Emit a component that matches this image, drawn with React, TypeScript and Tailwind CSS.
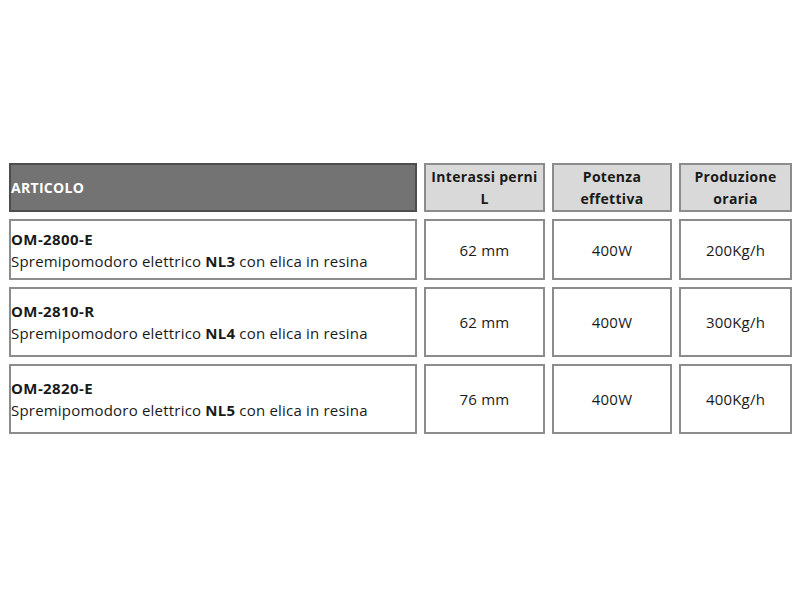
import React from "react";

const rows = [
  { code: "OM-2800-E", nl: "NL3", interassi: "62 mm", potenza: "400W", prod: "200Kg/h", h: "h-[61px]" },
  { code: "OM-2810-R", nl: "NL4", interassi: "62 mm", potenza: "400W", prod: "300Kg/h", h: "h-[70px]" },
  { code: "OM-2820-E", nl: "NL5", interassi: "76 mm", potenza: "400W", prod: "400Kg/h", h: "h-[70px]" },
];

export default function App() {
  return (
    <div className="w-[800px] h-[600px] bg-white pt-[163px] pl-[9px] text-[14px] leading-[22px] text-[#1a1a1a]" style={{ fontFamily: '"Open Sans", "Noto Sans", sans-serif' }}>
      <div className="grid grid-cols-[408px_121px_120px_113px] gap-x-[7px] gap-y-[7px]">
        <div className="h-[49px] bg-[#737373] border-2 border-[#4d4d4d] flex items-center pl-0 font-bold text-white tracking-[0.3px]">
          ARTICOLO
        </div>
        <div className="h-[49px] bg-[#d9d9d9] border-2 border-[#8c8c8c] flex flex-col items-center justify-center text-center font-bold tracking-[0.3px]">
          <span>Interassi perni</span>
          <span>L</span>
        </div>
        <div className="h-[49px] bg-[#d9d9d9] border-2 border-[#8c8c8c] flex flex-col items-center justify-center text-center font-bold tracking-[0.3px]">
          <span>Potenza</span>
          <span>effettiva</span>
        </div>
        <div className="h-[49px] bg-[#d9d9d9] border-2 border-[#8c8c8c] flex flex-col items-center justify-center text-center font-bold tracking-[0.3px]">
          <span>Produzione</span>
          <span>oraria</span>
        </div>
        {rows.map((r) => (
          <React.Fragment key={r.code}>
            <div className={`${r.h} border-2 border-[#8c8c8c] flex flex-col justify-center pl-0 text-[15px]`}>
              <span className="font-bold tracking-[0.4px]">{r.code}</span>
              <span className="tracking-[0.2px] whitespace-nowrap">
                Spremipomodoro elettrico <b className="font-bold">{r.nl}</b> con elica in resina
              </span>
            </div>
            <div className={`${r.h} border-2 border-[#8c8c8c] flex items-center justify-center text-[15px] tracking-[0.2px]`}>{r.interassi}</div>
            <div className={`${r.h} border-2 border-[#8c8c8c] flex items-center justify-center text-[15px] tracking-[0.2px]`}>{r.potenza}</div>
            <div className={`${r.h} border-2 border-[#8c8c8c] flex items-center justify-center text-[15px] tracking-[0.2px]`}>{r.prod}</div>
          </React.Fragment>
        ))}
      </div>
    </div>
  );
}
